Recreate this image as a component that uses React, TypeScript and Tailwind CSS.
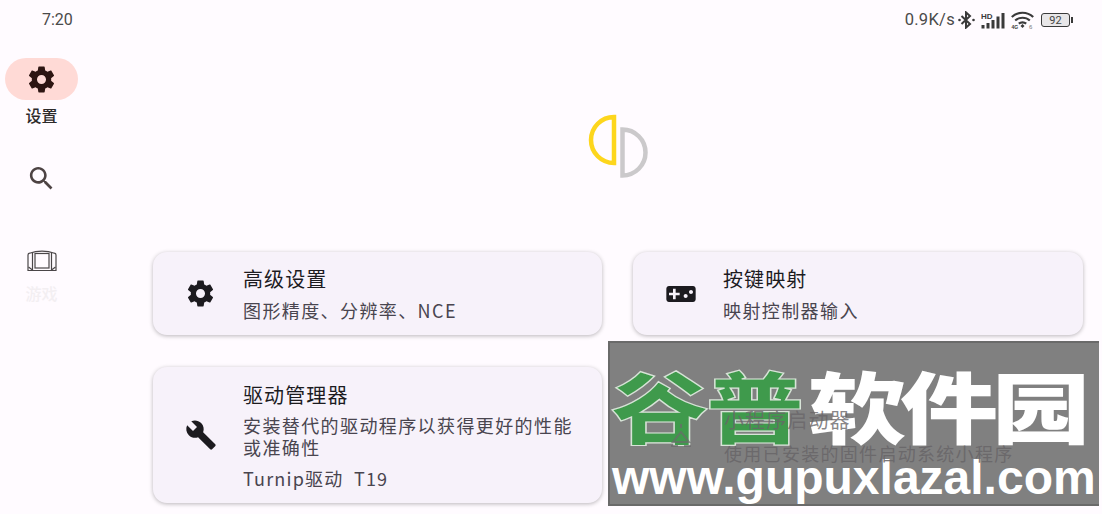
const GEAR = "M19.43 12.98c.04-.32.07-.64.07-.98s-.03-.66-.07-.98l2.11-1.65c.19-.15.24-.42.12-.64l-2-3.46c-.12-.22-.39-.3-.61-.22l-2.49 1c-.52-.4-1.08-.73-1.69-.98l-.38-2.65C14.46 2.18 14.25 2 14 2h-4c-.25 0-.46.18-.49.42l-.38 2.65c-.61.25-1.17.59-1.69.98l-2.49-1c-.23-.09-.49 0-.61.22l-2 3.46c-.13.22-.07.49.12.64l2.11 1.65c-.04.32-.07.65-.07.98s.03.66.07.98l-2.11 1.65c-.19.15-.24.42-.12.64l2 3.46c.12.22.39.3.61.22l2.49-1c.52.4 1.08.73 1.69.98l.38 2.65c.03.24.24.42.49.42h4c.25 0 .46-.18.49-.42l.38-2.65c.61-.25 1.17-.59 1.69-.98l2.49 1c.23.09.49 0 .61-.22l2-3.46c.12-.22.07-.49-.12-.64l-2.11-1.65zM12 15.5c-1.93 0-3.5-1.57-3.5-3.5s1.57-3.5 3.5-3.5 3.5 1.57 3.5 3.5-1.57 3.5-3.5 3.5z";
const SEARCH = "M15.5 14h-.79l-.28-.27C15.41 12.59 16 11.11 16 9.5 16 5.91 13.09 3 9.5 3S3 5.91 3 9.5 5.91 16 9.5 16c1.61 0 3.09-.59 4.23-1.57l.27.28v.79l5 4.99L20.49 19l-4.99-5zm-6 0C7.01 14 5 11.99 5 9.5S7.01 5 9.5 5 14 7.01 14 9.5 11.99 14 9.5 14z";
const BUILD = "M22.7 19l-9.1-9.1c.9-2.3.4-5-1.5-6.9-2-2-5-2.4-7.4-1.3L9 6 6 9 1.6 4.7C.4 7.1.9 10.1 2.9 12.1c1.9 1.9 4.6 2.4 6.9 1.5l9.1 9.1c.4.4 1 .4 1.4 0l2.3-2.3c.5-.4.5-1.1.1-1.4z";
const PAD = "M21 6H3c-1.1 0-2 .9-2 2v8c0 1.1.9 2 2 2h18c1.1 0 2-.9 2-2V8c0-1.1-.9-2-2-2zm-10 7H8v3H6v-3H3v-2h3V8h2v3h3v2zm4.5 2c-.83 0-1.5-.67-1.5-1.5s.67-1.5 1.5-1.5 1.5.67 1.5 1.5-.67 1.5-1.5 1.5zm4-3c-.83 0-1.5-.67-1.5-1.5S18.67 9 19.5 9s1.5.67 1.5 1.5-.67 1.5-1.5 1.5z";

function Icon({ d, size, color }: { d: string; size: number; color: string }) {
  return (
    <svg width={size} height={size} viewBox="0 0 24 24" fill={color}>
      <path d={d} />
    </svg>
  );
}

function StatusIcons() {
  return (
    <div className="flex items-center text-[#3a3a3a]">
      <svg className="ml-[3px]" width="17" height="18" viewBox="0 0 17 18" fill="none" stroke="#3a3a3a" strokeWidth="2">
        <path d="M3.5 5l8.5 8-4 3.6V1.4L12 5l-8.5 8" />
        <circle cx="1.5" cy="9" r="1.3" fill="#3a3a3a" stroke="none" />
        <circle cx="15.5" cy="9" r="1.3" fill="#3a3a3a" stroke="none" />
      </svg>
      <svg className="ml-[6px]" width="24" height="17" viewBox="0 0 24 17" fill="#3a3a3a">
        <text x="0" y="7" fontSize="8" fontWeight="700" fontFamily="Liberation Sans, sans-serif">HD</text>
        <rect x="0.5" y="13" width="3" height="3.5" />
        <rect x="5.5" y="11" width="3" height="5.5" />
        <rect x="10.5" y="8" width="3" height="8.5" />
        <rect x="15.5" y="4.5" width="3" height="12" />
        <rect x="20.5" y="1" width="3" height="15.5" />
      </svg>
      <svg className="ml-[6px]" width="23" height="18" viewBox="0 0 23 18" fill="none" stroke="#3a3a3a" strokeWidth="2.2">
        <path d="M0.8 6c6-5.7 15.4-5.7 21.4 0" />
        <path d="M4.2 9.5c4-3.7 10.6-3.7 14.6 0" />
        <path d="M7.8 12.6c2-1.7 5.4-1.7 7.4 0" />
        <path d="M11.5 13l2 2-2 2-2-2z" fill="#3a3a3a" stroke="none" />
        <text x="0.5" y="17.5" fontSize="5" fontWeight="700" fill="#3a3a3a" stroke="none" fontFamily="Liberation Sans, sans-serif">4G</text>
        <text x="18" y="17.5" fontSize="6" fill="#777" stroke="none" fontFamily="Liberation Sans, sans-serif">6</text>
      </svg>
      <div className="flex items-center ml-[7px]">
        <div className="w-[29px] h-[14px] rounded-[3px] border-[1.5px] border-[#3a3a3a] bg-[#e8e6e8] flex items-center justify-center text-[11px] leading-none text-[#444] font-['Roboto',sans-serif]">
          92
        </div>
        <div className="w-[2px] h-[6px] bg-[#3a3a3a] ml-[1px]" />
      </div>
    </div>
  );
}

function GamesIcon() {
  return (
    <svg width="30" height="22" viewBox="0 0 30 22" fill="none" stroke="#4a4648" strokeWidth="1.2">
      <path d="M1 20.5V5c0-1 .6-1.6 1.5-1.8C6 2 10 1.2 15 1.2S24 2 27.5 3.2C28.4 3.4 29 4 29 5v15.5H1z" />
      <rect x="8" y="3.5" width="14" height="14.5" />
      <path d="M5.5 3v17M24.5 3v17" />
      <path d="M1.5 17l4 3M28.5 17l-4 3" />
    </svg>
  );
}

function Card({ icon, title, lines, extra }: { icon: React.ReactNode; title: string; lines: string; extra?: string }) {
  return (
    <div className="bg-[#f7f2fa] rounded-[14px] shadow-[0_1px_4px_rgba(0,0,0,0.28)] flex items-center">
      <div className="w-[90px] shrink-0 flex justify-center pl-[5px] text-center">{icon}</div>
      <div className="flex-1 min-w-0 pr-[28px]">
        <div className={`text-[20px] leading-[28px] tracking-[1.1px] text-[#1c1b1f] ${extra ? "" : "-mt-[1px]"}`}>{title}</div>
        <div className={`${extra ? "mt-[5px]" : "mt-[6px]"} text-[18px] leading-[22px] tracking-[1.4px] text-[#49454f]`}>{lines}</div>
        {extra && <div className="mt-[8px] text-[18px] leading-[24px] tracking-[1.2px] text-[#49454f] whitespace-pre">{extra}</div>}
      </div>
    </div>
  );
}

export default function App() {
  return (
    <div className="relative w-[1102px] h-[514px] overflow-hidden bg-[#fffbff] font-['Noto_Sans_CJK_SC','Noto_Sans',sans-serif]">
      <div className="h-[40px] flex items-center justify-between pl-[42px] pr-[29px]">
        <span className="text-[16px] text-[#4a4a4a] font-['Roboto',sans-serif]">7:20</span>
        <div className="flex items-center">
          <span className="text-[16.5px] tracking-[0.3px] text-[#4a4a4a] font-['Roboto',sans-serif]">0.9K/s</span>
          <StatusIcons />
        </div>
      </div>
      <div className="flex h-[474px]">
        <nav className="w-[83px] shrink-0 flex flex-col items-center pt-[18px]">
          <div className="w-[73px] h-[42px] rounded-full bg-[#ffdad6] flex items-center justify-center">
            <Icon d={GEAR} size={31} color="#2d1512" />
          </div>
          <div className="mt-[4px] text-[16px] leading-[22px] font-medium text-[#2d2a2a]">设置</div>
          <div className="mt-[31px] h-[42px] flex items-center justify-center">
            <Icon d={SEARCH} size={31} color="#4d4343" />
          </div>
          <div className="mt-[41px] h-[42px] flex items-center justify-center">
            <GamesIcon />
          </div>
          <div className="text-[16px] leading-[22px] font-medium text-[#f3eff2]">游戏</div>
        </nav>
        <main className="w-[930px] ml-[70px] flex flex-col">
          <div className="h-[212px] pt-[74px] flex justify-center">
            <svg width="60" height="66" viewBox="0 0 60 66">
              <path d="M26 3A23 23 0 0 0 26 49Z" fill="none" stroke="#fdd61d" strokeWidth="4.5" />
              <path d="M34.5 15.5A23 23 0 0 1 34.5 61.5Z" fill="none" stroke="#cbc9cb" strokeWidth="4.5" />
            </svg>
          </div>
          <div className="grid grid-cols-[449px_450px] gap-x-[31px] gap-y-[32px] grid-rows-[83px_136px]">
            <Card icon={<Icon d={GEAR} size={31} color="#1c1b1f" />} title="高级设置" lines="图形精度、分辨率、NCE" />
            <Card icon={<Icon d={PAD} size={32} color="#1c1b1f" />} title="按键映射" lines="映射控制器输入" />
            <Card icon={<Icon d={BUILD} size={32} color="#1c1b1f" />} title="驱动管理器" lines="安装替代的驱动程序以获得更好的性能或准确性" extra="Turnip驱动  T19" />
            <div className="bg-[#f7f2fa] rounded-[14px]" />
          </div>
        </main>
      </div>
      {/* watermark laid over the page */}
      <div className="absolute left-[608px] top-[341px] w-[491px] h-[165px] bg-[#808080] border-t-2 border-l-2 border-b-2 border-[#6a6a6a] overflow-hidden">
        <div className="flex items-center h-[112px] pl-[1px] pt-[12px] text-[98px] leading-none font-black tracking-[-3px] whitespace-nowrap scale-y-[0.8]">
          <span className="text-[#3f9a4c] [-webkit-text-stroke:1.5px_#d8e4d8]">谷普</span>
          <span className="text-white ml-[7px] tracking-[-6px]">软件园</span>
        </div>
        <div className="-mt-[1px] pl-[2px] text-[48px] leading-[48px] font-bold text-white font-['Liberation_Sans',sans-serif] whitespace-nowrap">www.gupuxlazal.com</div>
      </div>
      <svg className="absolute left-[668px] top-[422px]" width="26" height="26" viewBox="0 0 26 26" fill="none" stroke="#6c6a6c" strokeWidth="2" opacity="0.7">
        <path d="M13 2v4M13 10L5 20h16zM3 24h7M16 24h7" />
      </svg>
      <div className="absolute left-[724px] top-[407px] text-[20px] leading-[26px] tracking-[1.1px] text-[#696669]/80">小程序启动器</div>
      <div className="absolute left-[724px] top-[442px] text-[18px] leading-[22px] tracking-[1.3px] text-[#696669]/90">使用已安装的固件启动系统小程序</div>
    </div>
  );
}
